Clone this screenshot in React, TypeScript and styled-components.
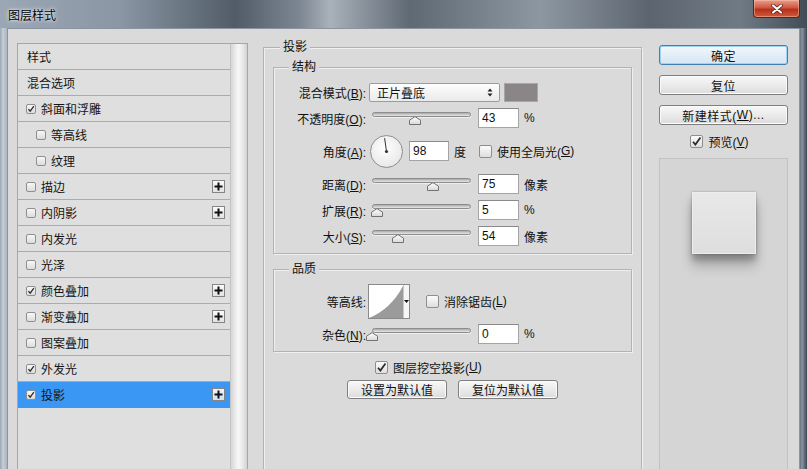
import React from "react";
import styled, { createGlobalStyle } from "styled-components";

const GlobalStyle = createGlobalStyle`
  html, body { margin: 0; padding: 0; background: #4f5a66; }
  body {
    font-family: "Liberation Sans", "Noto Sans CJK SC", sans-serif;
    font-size: 12px;
    color: #111;
  }
  * { box-sizing: border-box; }
`;

const Window = styled.div`
  width: 807px;
  height: 469px;
  overflow: hidden;
  display: flex;
  flex-direction: column;
  background: linear-gradient(
    90deg,
    #9aa6b4 0px,
    #c6ced7 3px,
    #aab5c1 7px,
    #6b7683 400px,
    #56616d 799px,
    #8995a2 802px,
    #3d4752 807px
  );
`;

const TitleBar = styled.div`
  height: 28px;
  flex-shrink: 0;
  display: flex;
  align-items: center;
  padding-left: 8px;
  background: linear-gradient(
    90deg,
    #9ba7b5 0px,
    #8a96a4 120px,
    #525c68 235px,
    #7d8793 300px,
    #a9b1ba 330px,
    #5f6974 410px,
    #8d97a2 540px,
    #5c656f 650px,
    #707a85 740px,
    #434d58 807px
  );
`;

const Title = styled.span`
  color: #000;
  font-size: 12px;
  text-shadow: 0 0 5px rgba(255, 255, 255, 0.9), 0 0 2px rgba(255, 255, 255, 0.9);
`;

const CloseButton = styled.div`
  margin-left: auto;
  margin-right: 7px;
  align-self: flex-start;
  width: 47px;
  height: 18px;
  display: flex;
  align-items: center;
  justify-content: center;
  border: 1px solid #5e2318;
  border-top: none;
  border-radius: 0 0 4px 4px;
  background: linear-gradient(#e8a08f, #d0563f 45%, #b8301b 55%, #cf5a3c);
  box-shadow: inset 0 0 0 1px rgba(255, 200, 180, 0.45);
`;

const Frame = styled.div`
  flex: 1;
  display: flex;
  padding: 0 7px;
  min-height: 0;
`;

const Dialog = styled.div`
  flex: 1;
  display: flex;
  align-items: flex-start;
  padding: 10px 11px 0 9px;
  background: #dadada;
  border: 1px solid #8a95a1;
  border-bottom: none;
  overflow: hidden;
`;

/* ---------- left list ---------- */

const ListBox = styled.div`
  width: 231px;
  height: 440px;
  margin-top: 4px;
  display: flex;
  border: 1px solid #a6a6a6;
  border-bottom: none;
  flex-shrink: 0;
`;

const Items = styled.div`
  width: 212px;
  background: #dfdfdf;
`;

const ScrollStrip = styled.div`
  flex: 1;
  border-left: 1px solid #c4c4c4;
  background: linear-gradient(90deg, #d6d6d6, #f7f7f7 45%, #ebebeb 70%, #d2d2d2);
`;

const ListRow = styled.div<{ $selected?: boolean; $pad: number }>`
  height: 26px;
  display: flex;
  align-items: center;
  padding-left: ${(p) => p.$pad}px;
  border-bottom: 1px solid ${(p) => (p.$selected ? "#3a97f4" : "#ababab")};
  background: ${(p) => (p.$selected ? "#3a97f4" : "transparent")};
  color: #141414;
  white-space: nowrap;
`;

const SmallCheck = styled.span`
  width: 10px;
  height: 10px;
  margin-right: 5px;
  flex-shrink: 0;
  border: 1px solid #8f8f8f;
  border-radius: 2px;
  background: linear-gradient(#f7f7f7, #dcdcdc);
  display: flex;
  align-items: center;
  justify-content: center;
`;

const PlusBox = styled.span<{ $selected?: boolean }>`
  margin-left: auto;
  margin-right: 5px;
  width: 13px;
  height: 13px;
  border: 1px solid #858585;
  background: ${(p) => (p.$selected ? "linear-gradient(#eef5fc, #cfe2f5)" : "linear-gradient(#fafafa, #e2e2e2)")};
  display: flex;
  align-items: center;
  justify-content: center;
`;

/* ---------- middle ---------- */

const Group = styled.fieldset<{ $outer?: boolean }>`
  margin: ${(p) => (p.$outer ? "0 0 0 15px" : "4px 9px 0 9px")};
  padding: 0;
  min-width: 0;
  border: 1px solid #b3b3b3;
  box-shadow: inset 1px 1px 0 #efefef, 1px 1px 0 #efefef;
  width: ${(p) => (p.$outer ? "379px" : "auto")};
  height: ${(p) => (p.$outer ? "460px" : "auto")};
  flex-shrink: 0;
`;

const Legend = styled.legend<{ $indent: number }>`
  margin-left: ${(p) => p.$indent}px;
  padding: 0 3px;
  line-height: 16px;
  background: #dadada;
  color: #111;
`;

const GroupBody = styled.div`
  padding: 4px 0 4px;
`;

const Row = styled.div<{ $h?: number }>`
  height: ${(p) => p.$h ?? 26}px;
  display: flex;
  align-items: center;
  white-space: nowrap;
`;

const Label = styled.span`
  width: 92px;
  flex-shrink: 0;
  text-align: right;
`;

const Select = styled.div`
  margin-left: 3px;
  width: 131px;
  height: 19px;
  display: flex;
  align-items: center;
  padding: 0 6px 0 7px;
  border: 1px solid #9c9c9c;
  border-radius: 2px;
  background: linear-gradient(#fefefe, #eaeaea);
  justify-content: space-between;
`;

const Swatch = styled.div`
  margin-left: 4px;
  width: 34px;
  height: 19px;
  background: #8a8587;
  border: 1px solid #a7a7a7;
`;

const SliderBox = styled.div`
  position: relative;
  margin-left: 3px;
  width: 105px;
  height: 13px;
  flex-shrink: 0;
`;

const Track = styled.div`
  margin: 0 3px;
  height: 5px;
  border-radius: 3px;
  border: 1px solid #8c8c8c;
  background: linear-gradient(#a9a9a9, #d6d6d6 70%, #e6e6e6);
  box-shadow: 0 1px 0 #efefef;
`;

const Thumb = styled.svg`
  position: absolute;
  top: 4px;
  transform: translateX(-50%);
`;

const NumInput = styled.div<{ $w?: number; $gap?: number }>`
  margin-left: ${(p) => p.$gap ?? 4}px;
  width: ${(p) => p.$w ?? 41}px;
  height: 20px;
  padding-left: 3px;
  display: flex;
  align-items: center;
  background: #fff;
  border: 1px solid #a4a4a4;
  border-top-color: #8a8a8a;
  color: #111;
`;

const Unit = styled.span<{ $gap?: number }>`
  margin-left: ${(p) => p.$gap ?? 5}px;
`;

const Dial = styled.svg`
  margin-left: 4px;
  flex-shrink: 0;
`;

const CheckBox = styled.span<{ $gap?: number }>`
  margin-left: ${(p) => p.$gap ?? 0}px;
  margin-right: 5px;
  width: 13px;
  height: 13px;
  flex-shrink: 0;
  border: 1px solid #8e8e8e;
  border-radius: 2px;
  background: linear-gradient(#fbfbfb, #dedede);
  display: flex;
  align-items: center;
  justify-content: center;
`;

const Contour = styled.div`
  margin-left: 2px;
  width: 42px;
  height: 35px;
  display: flex;
  border: 1px solid #8a8a8a;
  background: #fff;
  flex-shrink: 0;
`;

const ContourArrow = styled.div`
  width: 6px;
  border-left: 1px solid #c8c8c8;
  display: flex;
  align-items: center;
  justify-content: center;
  background: #f6f6f6;
`;

const KnockoutRow = styled.div`
  margin-top: 5px;
  height: 20px;
  padding-left: 111px;
  display: flex;
  align-items: center;
`;

const DefaultsRow = styled.div`
  margin-top: 3px;
  display: flex;
  justify-content: center;
  gap: 11px;
`;

const Button = styled.div<{ $w?: number; $primary?: boolean }>`
  width: ${(p) => (p.$w ? `${p.$w}px` : "100%")};
  height: ${(p) => (p.$w ? 19 : 20)}px;
  display: flex;
  align-items: center;
  justify-content: center;
  border: 1px solid ${(p) => (p.$primary ? "#3f7fb2" : "#7f7f7f")};
  border-radius: 3px;
  background: ${(p) =>
    p.$primary ? "linear-gradient(#f2f8fd, #e3eef8 50%, #d6e6f4)" : "linear-gradient(#f8f8f8, #ebebeb 50%, #dcdcdc)"};
  box-shadow: inset 0 0 0 1px ${(p) => (p.$primary ? "#9fd3f3" : "#fbfbfb")};
  color: #111;
  letter-spacing: ${(p) => (p.$w ? "0" : "0.5px")};
`;

/* ---------- right ---------- */

const Side = styled.div`
  margin-left: 17px;
  margin-top: 6px;
  width: 129px;
  flex-shrink: 0;
  display: flex;
  flex-direction: column;
  gap: 10px;
`;

const PreviewToggle = styled.div`
  height: 13px;
  display: flex;
  align-items: center;
  justify-content: center;
  padding-right: 8px;
`;

const PreviewPane = styled.div`
  height: 320px;
  border: 1px solid #c2c2c2;
  background: #d5d5d5;
  padding-top: 33px;
`;

const PreviewSquare = styled.div`
  width: 64px;
  height: 62px;
  margin: 0 auto;
  background: linear-gradient(#e8e8e8, #dedede);
  border: 1px solid #ededed;
  box-shadow: 0 0 2px rgba(0, 0, 0, 0.3), 0 6px 6px rgba(0, 0, 0, 0.22), 0 12px 12px rgba(0, 0, 0, 0.22);
`;

/* ---------- drawings ---------- */

const Tick = ({ size = 10 }: { size?: number }) => (
  <svg width={size} height={size} viewBox="0 0 10 10">
    <path d="M1.8 5.2 L4 7.8 L8.6 1.4" fill="none" stroke="#2b2b2b" strokeWidth="1.6" />
  </svg>
);

const Plus = () => (
  <svg width="9" height="9" viewBox="0 0 9 9">
    <path d="M4.5 0.5 V8.5 M0.5 4.5 H8.5" stroke="#111" strokeWidth="2" />
  </svg>
);

const Slider = ({ frac }: { frac: number }) => (
  <SliderBox>
    <Track />
    <Thumb width="12" height="9" viewBox="0 0 12 9" style={{ left: `${3 + frac * 99}px` }}>
      <defs>
        <linearGradient id="thumbFill" x1="0" y1="0" x2="0" y2="1">
          <stop offset="0" stopColor="#ffffff" />
          <stop offset="1" stopColor="#d8d8d8" />
        </linearGradient>
      </defs>
      <path d="M0.5 8.5 V4.2 L6 0.6 L11.5 4.2 V8.5 Z" fill="url(#thumbFill)" stroke="#727272" />
    </Thumb>
  </SliderBox>
);

const angle = (98 * Math.PI) / 180;

type Layer = {
  label: string;
  header?: boolean;
  indent?: boolean;
  checked?: boolean;
  plus?: boolean;
  selected?: boolean;
};

const layers: Layer[] = [
  { label: "样式", header: true },
  { label: "混合选项", header: true },
  { label: "斜面和浮雕", checked: true },
  { label: "等高线", indent: true },
  { label: "纹理", indent: true },
  { label: "描边", plus: true },
  { label: "内阴影", plus: true },
  { label: "内发光" },
  { label: "光泽" },
  { label: "颜色叠加", checked: true, plus: true },
  { label: "渐变叠加", plus: true },
  { label: "图案叠加" },
  { label: "外发光", checked: true },
  { label: "投影", checked: true, plus: true, selected: true },
];

const App = () => {
  return (
    <>
      <GlobalStyle />
      <Window>
        <TitleBar>
          <Title>图层样式</Title>
          <CloseButton>
            <svg width="12" height="10" viewBox="0 0 12 10">
              <path d="M2 1.5 L10 8.5 M10 1.5 L2 8.5" stroke="#5a1a10" strokeWidth="3.6" strokeLinecap="round" />
              <path d="M2 1.5 L10 8.5 M10 1.5 L2 8.5" stroke="#fff" strokeWidth="2.2" strokeLinecap="round" />
            </svg>
          </CloseButton>
        </TitleBar>
        <Frame>
          <Dialog>
            <ListBox>
              <Items>
                {layers.map((layer) => (
                  <ListRow
                    key={layer.label}
                    $selected={layer.selected}
                    $pad={layer.header ? 9 : layer.indent ? 18 : 8}
                  >
                    {!layer.header && <SmallCheck>{layer.checked && <Tick />}</SmallCheck>}
                    {layer.label}
                    {layer.plus && (
                      <PlusBox $selected={layer.selected}>
                        <Plus />
                      </PlusBox>
                    )}
                  </ListRow>
                ))}
              </Items>
              <ScrollStrip />
            </ListBox>

            <Group $outer>
              <Legend $indent={16}>投影</Legend>
              <Group>
                <Legend $indent={15}>结构</Legend>
                <GroupBody>
                  <Row>
                    <Label>
                      混合模式(<u>B</u>):
                    </Label>
                    <Select>
                      <span>正片叠底</span>
                      <svg width="6" height="9" viewBox="0 0 6 9">
                        <path d="M0.5 3.5 L3 0.5 L5.5 3.5 Z M0.5 5.5 L3 8.5 L5.5 5.5 Z" fill="#222" />
                      </svg>
                    </Select>
                    <Swatch />
                  </Row>
                  <Row>
                    <Label>
                      不透明度(<u>O</u>):
                    </Label>
                    <Slider frac={0.43} />
                    <NumInput>43</NumInput>
                    <Unit>%</Unit>
                  </Row>
                  <Row $h={40}>
                    <Label>
                      角度(<u>A</u>):
                    </Label>
                    <Dial width="33" height="33" viewBox="0 0 33 33">
                      <defs>
                        <radialGradient id="dialFill" cx="0.45" cy="0.4" r="0.7">
                          <stop offset="0" stopColor="#ffffff" />
                          <stop offset="1" stopColor="#e4e4e4" />
                        </radialGradient>
                      </defs>
                      <circle cx="16.5" cy="16.5" r="16" fill="url(#dialFill)" stroke="#8c8c8c" />
                      <line
                        x1="16.5"
                        y1="16.5"
                        x2={16.5 + Math.cos(angle) * 13.5}
                        y2={16.5 - Math.sin(angle) * 13.5}
                        stroke="#333"
                        strokeWidth="1"
                      />
                      <circle cx="16.5" cy="16.5" r="1.6" fill="#333" />
                    </Dial>
                    <NumInput $w={40} $gap={6}>
                      98
                    </NumInput>
                    <Unit>度</Unit>
                    <CheckBox $gap={13} />
                    使用全局光(<u>G</u>)
                  </Row>
                  <Row>
                    <Label>
                      距离(<u>D</u>):
                    </Label>
                    <Slider frac={0.62} />
                    <NumInput>75</NumInput>
                    <Unit>像素</Unit>
                  </Row>
                  <Row>
                    <Label>
                      扩展(<u>R</u>):
                    </Label>
                    <Slider frac={0.05} />
                    <NumInput>5</NumInput>
                    <Unit>%</Unit>
                  </Row>
                  <Row>
                    <Label>
                      大小(<u>S</u>):
                    </Label>
                    <Slider frac={0.26} />
                    <NumInput>54</NumInput>
                    <Unit>像素</Unit>
                  </Row>
                </GroupBody>
              </Group>
              <Group style={{ marginTop: 7 }}>
                <Legend $indent={15}>品质</Legend>
                <GroupBody>
                  <Row $h={40}>
                    <Label>等高线:</Label>
                    <Contour>
                      <svg width="34" height="33" viewBox="0 0 34 33">
                        <path d="M0 33 Q22 24 34 1 L34 33 Z" fill="#9b9b9b" />
                      </svg>
                      <ContourArrow>
                        <svg width="5" height="3" viewBox="0 0 5 3">
                          <path d="M0 0 H5 L2.5 3 Z" fill="#111" />
                        </svg>
                      </ContourArrow>
                    </Contour>
                    <CheckBox $gap={16} />
                    消除锯齿(<u>L</u>)
                  </Row>
                  <Row>
                    <Label>
                      杂色(<u>N</u>):
                    </Label>
                    <Slider frac={0} />
                    <NumInput>0</NumInput>
                    <Unit>%</Unit>
                  </Row>
                </GroupBody>
              </Group>
              <KnockoutRow>
                <CheckBox>
                  <Tick size={11} />
                </CheckBox>
                图层挖空投影(<u>U</u>)
              </KnockoutRow>
              <DefaultsRow>
                <Button $w={100}>设置为默认值</Button>
                <Button $w={100}>复位为默认值</Button>
              </DefaultsRow>
            </Group>

            <Side>
              <Button $primary>确定</Button>
              <Button>复位</Button>
              <Button>
                新建样式(<u>W</u>)...
              </Button>
              <PreviewToggle>
                <CheckBox $gap={0}>
                  <Tick size={11} />
                </CheckBox>
                预览(<u>V</u>)
              </PreviewToggle>
              <PreviewPane>
                <PreviewSquare />
              </PreviewPane>
            </Side>
          </Dialog>
        </Frame>
      </Window>
    </>
  );
};

export default App;
